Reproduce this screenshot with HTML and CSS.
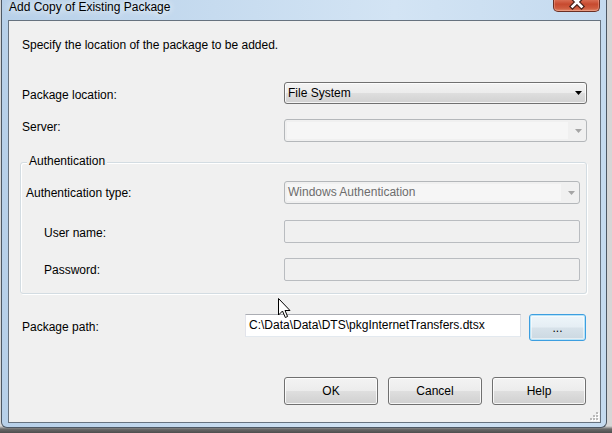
FILE: index.html
```html
<!DOCTYPE html>
<html>
<head>
<meta charset="utf-8">
<title>Add Copy of Existing Package</title>
<link rel="stylesheet" href="styles.css">
</head>
<body>
<div class="window">
  <div class="titlebar"><span class="title">Add Copy of Existing Package</span></div>
  <div class="close">
    <svg width="46" height="18" viewBox="0 0 46 18">
      <path d="M18.5 4.5 L27.5 13.5 M27.5 4.5 L18.5 13.5" stroke="#4a2119" stroke-width="5" stroke-linecap="square"/>
      <path d="M18.5 4.5 L27.5 13.5 M27.5 4.5 L18.5 13.5" stroke="#ffffff" stroke-width="2.6" stroke-linecap="square"/>
    </svg>
  </div>
  <div class="client">
    <p class="intro">Specify the location of the package to be added.</p>

    <div class="row row-loc">
      <span class="label lbl-loc">Package location:</span>
      <div class="combo combo-wide">
        <span class="combo-text">File System</span>
        <svg class="arrow" width="7" height="4" viewBox="0 0 7 4"><path d="M0 0 H7 L3.5 4 Z" fill="#000"/></svg>
      </div>
    </div>

    <div class="row row-server">
      <span class="label lbl-server">Server:</span>
      <div class="combo combo-disabled combo-wide">
        <span class="combo-field"></span>
        <svg class="arrow" width="7" height="4" viewBox="0 0 7 4"><path d="M0 0 H7 L3.5 4 Z" fill="#a5a5a5"/></svg>
      </div>
    </div>

    <div class="group">
      <span class="group-title">Authentication</span>
      <div class="grow grow-type">
        <span class="label lbl-type">Authentication type:</span>
        <div class="combo combo-disabled combo-narrow">
          <span class="combo-field combo-field-text">Windows Authentication</span>
          <svg class="arrow" width="7" height="4" viewBox="0 0 7 4"><path d="M0 0 H7 L3.5 4 Z" fill="#a5a5a5"/></svg>
        </div>
      </div>
      <div class="grow grow-user">
        <span class="label lbl-indent lbl-user">User name:</span>
        <div class="textbox textbox-disabled"></div>
      </div>
      <div class="grow grow-pass">
        <span class="label lbl-indent lbl-pass">Password:</span>
        <div class="textbox textbox-disabled"></div>
      </div>
    </div>

    <div class="row row-path">
      <span class="label lbl-path">Package path:</span>
      <div class="textbox textbox-path">C:\Data\Data\DTS\pkgInternetTransfers.dtsx</div>
      <button class="btn btn-browse">...</button>
    </div>

    <div class="buttons">
      <button class="btn btn-dialog">OK</button>
      <button class="btn btn-dialog">Cancel</button>
      <button class="btn btn-dialog">Help</button>
    </div>

    <svg class="grip" width="9" height="9" viewBox="0 0 9 9">
      <g fill="#ffffff">
        <rect x="7" y="1" width="2" height="2"/>
        <rect x="4" y="4" width="2" height="2"/><rect x="7" y="4" width="2" height="2"/>
        <rect x="1" y="7" width="2" height="2"/><rect x="4" y="7" width="2" height="2"/><rect x="7" y="7" width="2" height="2"/>
      </g>
      <g fill="#b9b9b9">
        <rect x="6" y="0" width="2" height="2"/>
        <rect x="3" y="3" width="2" height="2"/><rect x="6" y="3" width="2" height="2"/>
        <rect x="0" y="6" width="2" height="2"/><rect x="3" y="6" width="2" height="2"/><rect x="6" y="6" width="2" height="2"/>
      </g>
    </svg>
  </div>
</div>

<svg class="cursor" width="13" height="21" viewBox="0 0 13 21">
  <path d="M0.5 0.5 L0.5 17 L4.5 13 L7.3 19.5 L9.6 18.5 L7 12.5 L12 12.5 Z" fill="#ffffff" stroke="#000000" stroke-width="1" stroke-linejoin="miter"/>
</svg>
</body>
</html>
```

FILE: styles.css
```css
* {
  box-sizing: border-box;
}

html, body {
  margin: 0;
  padding: 0;
}

body {
  width: 612px;
  height: 433px;
  overflow: hidden;
  position: relative;
  font-family: "Liberation Sans", Arial, sans-serif;
  font-size: 12px;
  line-height: 15px;
  color: #000;
  background: linear-gradient(#d6d6d6 0, #d6d6d6 426px, #6a6a6a 429px, #4e4e4e 433px);
}

.window {
  position: relative;
  margin-left: 1px;
  width: 606px;
  height: 428px;
  border: 1px solid #4d5864;
  border-top: none;
  border-radius: 0 0 6px 6px;
  padding: 0 5px 4px 6px;
  background: linear-gradient(to right, #b7d0e9 0%, #c6dbef 35%, #d3e4f4 65%, #c4daef 100%);
  display: flex;
  flex-direction: column;
}

.titlebar {
  height: 20px;
  padding-left: 1px;
  flex: none;
}

.title {
  line-height: 15px;
  color: #000;
  text-shadow: 0 0 6px rgba(255, 255, 255, 0.9), 0 0 10px rgba(255, 255, 255, 0.7);
}

.close {
  position: absolute;
  left: 551px;
  top: -7px;
  width: 47px;
  height: 19px;
  border: 1px solid #6a2f24;
  border-top: none;
  border-radius: 0 0 5px 5px;
  background: linear-gradient(#e6a08f 0%, #d86b51 40%, #c74a2f 62%, #cf5d40 85%, #e08a6d 100%);
  box-shadow: inset 0 0 0 1px rgba(255, 200, 180, 0.35);
  overflow: hidden;
}

.close svg {
  display: block;
}

.client {
  position: relative;
  flex: none;
  height: 403px;
  border: 1px solid #66727f;
  background: #f0f0f0;
  padding: 17px 0 0 13px;
  display: flex;
  flex-direction: column;
  align-items: flex-start;
}

.intro {
  margin: 0;
  height: 15px;
}

.row {
  display: flex;
  align-items: flex-start;
}

.row-loc {
  margin-top: 29px;
  height: 22px;
}

.row-server {
  margin-top: 15px;
  height: 23px;
}

.label {
  flex: none;
  white-space: nowrap;
}

.lbl-loc {
  width: 262px;
  padding-top: 6px;
}

.lbl-server {
  width: 262px;
  padding-top: 1px;
}

.combo {
  display: flex;
  align-items: center;
  justify-content: space-between;
  height: 100%;
  border-radius: 3px;
}

.combo-wide {
  width: 303px;
}

.combo-narrow {
  width: 296px;
  height: 23px;
}

.combo:not(.combo-disabled) {
  border: 1px solid #707070;
  padding: 0 4px 0 3px;
  background: linear-gradient(#f3f3f3 0%, #ececec 48%, #dedede 52%, #d1d1d1 100%);
  box-shadow: inset 0 0 0 1px rgba(255, 255, 255, 0.75);
}

.combo-text {
  line-height: 20px;
}

.arrow {
  display: block;
  flex: none;
}

.combo-disabled {
  border: 1px solid #b4b7ba;
  background: #f0f0f0;
  padding: 2px 4px 2px 2px;
}

.combo-field {
  align-self: stretch;
  width: 281px;
  background: #f6f6f6;
}

.combo-narrow .combo-field {
  width: 274px;
}

.combo-field-text {
  color: #6d6d6d;
  padding-left: 1px;
  line-height: 17px;
  white-space: nowrap;
  overflow: hidden;
}

.group {
  position: relative;
  margin-top: 20px;
  margin-left: -2px;
  width: 567px;
  border: 1px solid #d3dce2;
  border-radius: 3px;
  box-shadow: inset 1px 1px 0 #ffffff, 1px 1px 0 #ffffff;
  padding: 0 6px 12px 5px;
}

.group-title {
  position: absolute;
  top: -9px;
  left: 6px;
  padding: 0 2px;
  background: #f0f0f0;
}

.grow {
  display: flex;
  align-items: flex-start;
  height: 23px;
}

.grow-type {
  margin-top: 18px;
}

.grow-user {
  margin-top: 16px;
}

.grow-pass {
  margin-top: 15px;
}

.lbl-type {
  width: 258px;
  padding-top: 5px;
}

.lbl-indent {
  margin-left: 18px;
  width: 240px;
}

.lbl-user {
  padding-top: 6px;
}

.lbl-pass {
  padding-top: 5px;
}

.textbox {
  height: 23px;
  border-radius: 2px;
}

.textbox-disabled {
  width: 296px;
  border: 1px solid #b9bcc0;
  background: #f0f0f0;
}

.row-path {
  margin-top: 20px;
  height: 27px;
}

.lbl-path {
  width: 223px;
  padding-top: 6px;
}

.textbox-path {
  width: 276px;
  border: 1px solid;
  border-color: #abadb3 #dbdfe6 #e3e9ef #e2e3ea;
  border-radius: 0;
  background: #ffffff;
  padding-left: 3px;
  line-height: 21px;
  white-space: nowrap;
  overflow: hidden;
}

.btn {
  font-family: "Liberation Sans", Arial, sans-serif;
  font-size: 12px;
  color: #000;
  margin: 0;
  padding: 0;
  border: 1px solid #707070;
  border-radius: 3px;
  background: linear-gradient(#f3f3f3 0%, #ececec 48%, #dedede 52%, #d0d0d0 100%);
  box-shadow: inset 0 0 0 1px rgba(255, 255, 255, 0.8);
  line-height: 15px;
}

.btn-browse {
  margin-left: 8px;
  width: 57px;
  height: 27px;
  border-color: #3c9ee0;
  box-shadow: inset 0 0 0 1px #b7e3f8, inset 0 0 0 2px rgba(255, 255, 255, 0.5);
  background: linear-gradient(#eef6fb 0%, #e5eef4 48%, #d7e2ea 52%, #cbd8e1 100%);
  padding-top: 1px;
}

.buttons {
  display: flex;
  gap: 10px;
  margin-top: 36px;
  margin-left: 262px;
}

.btn-dialog {
  width: 94px;
  height: 28px;
}

.grip {
  position: absolute;
  right: 1px;
  bottom: 1px;
}

.cursor {
  position: absolute;
  left: 278px;
  top: 298px;
}
```
